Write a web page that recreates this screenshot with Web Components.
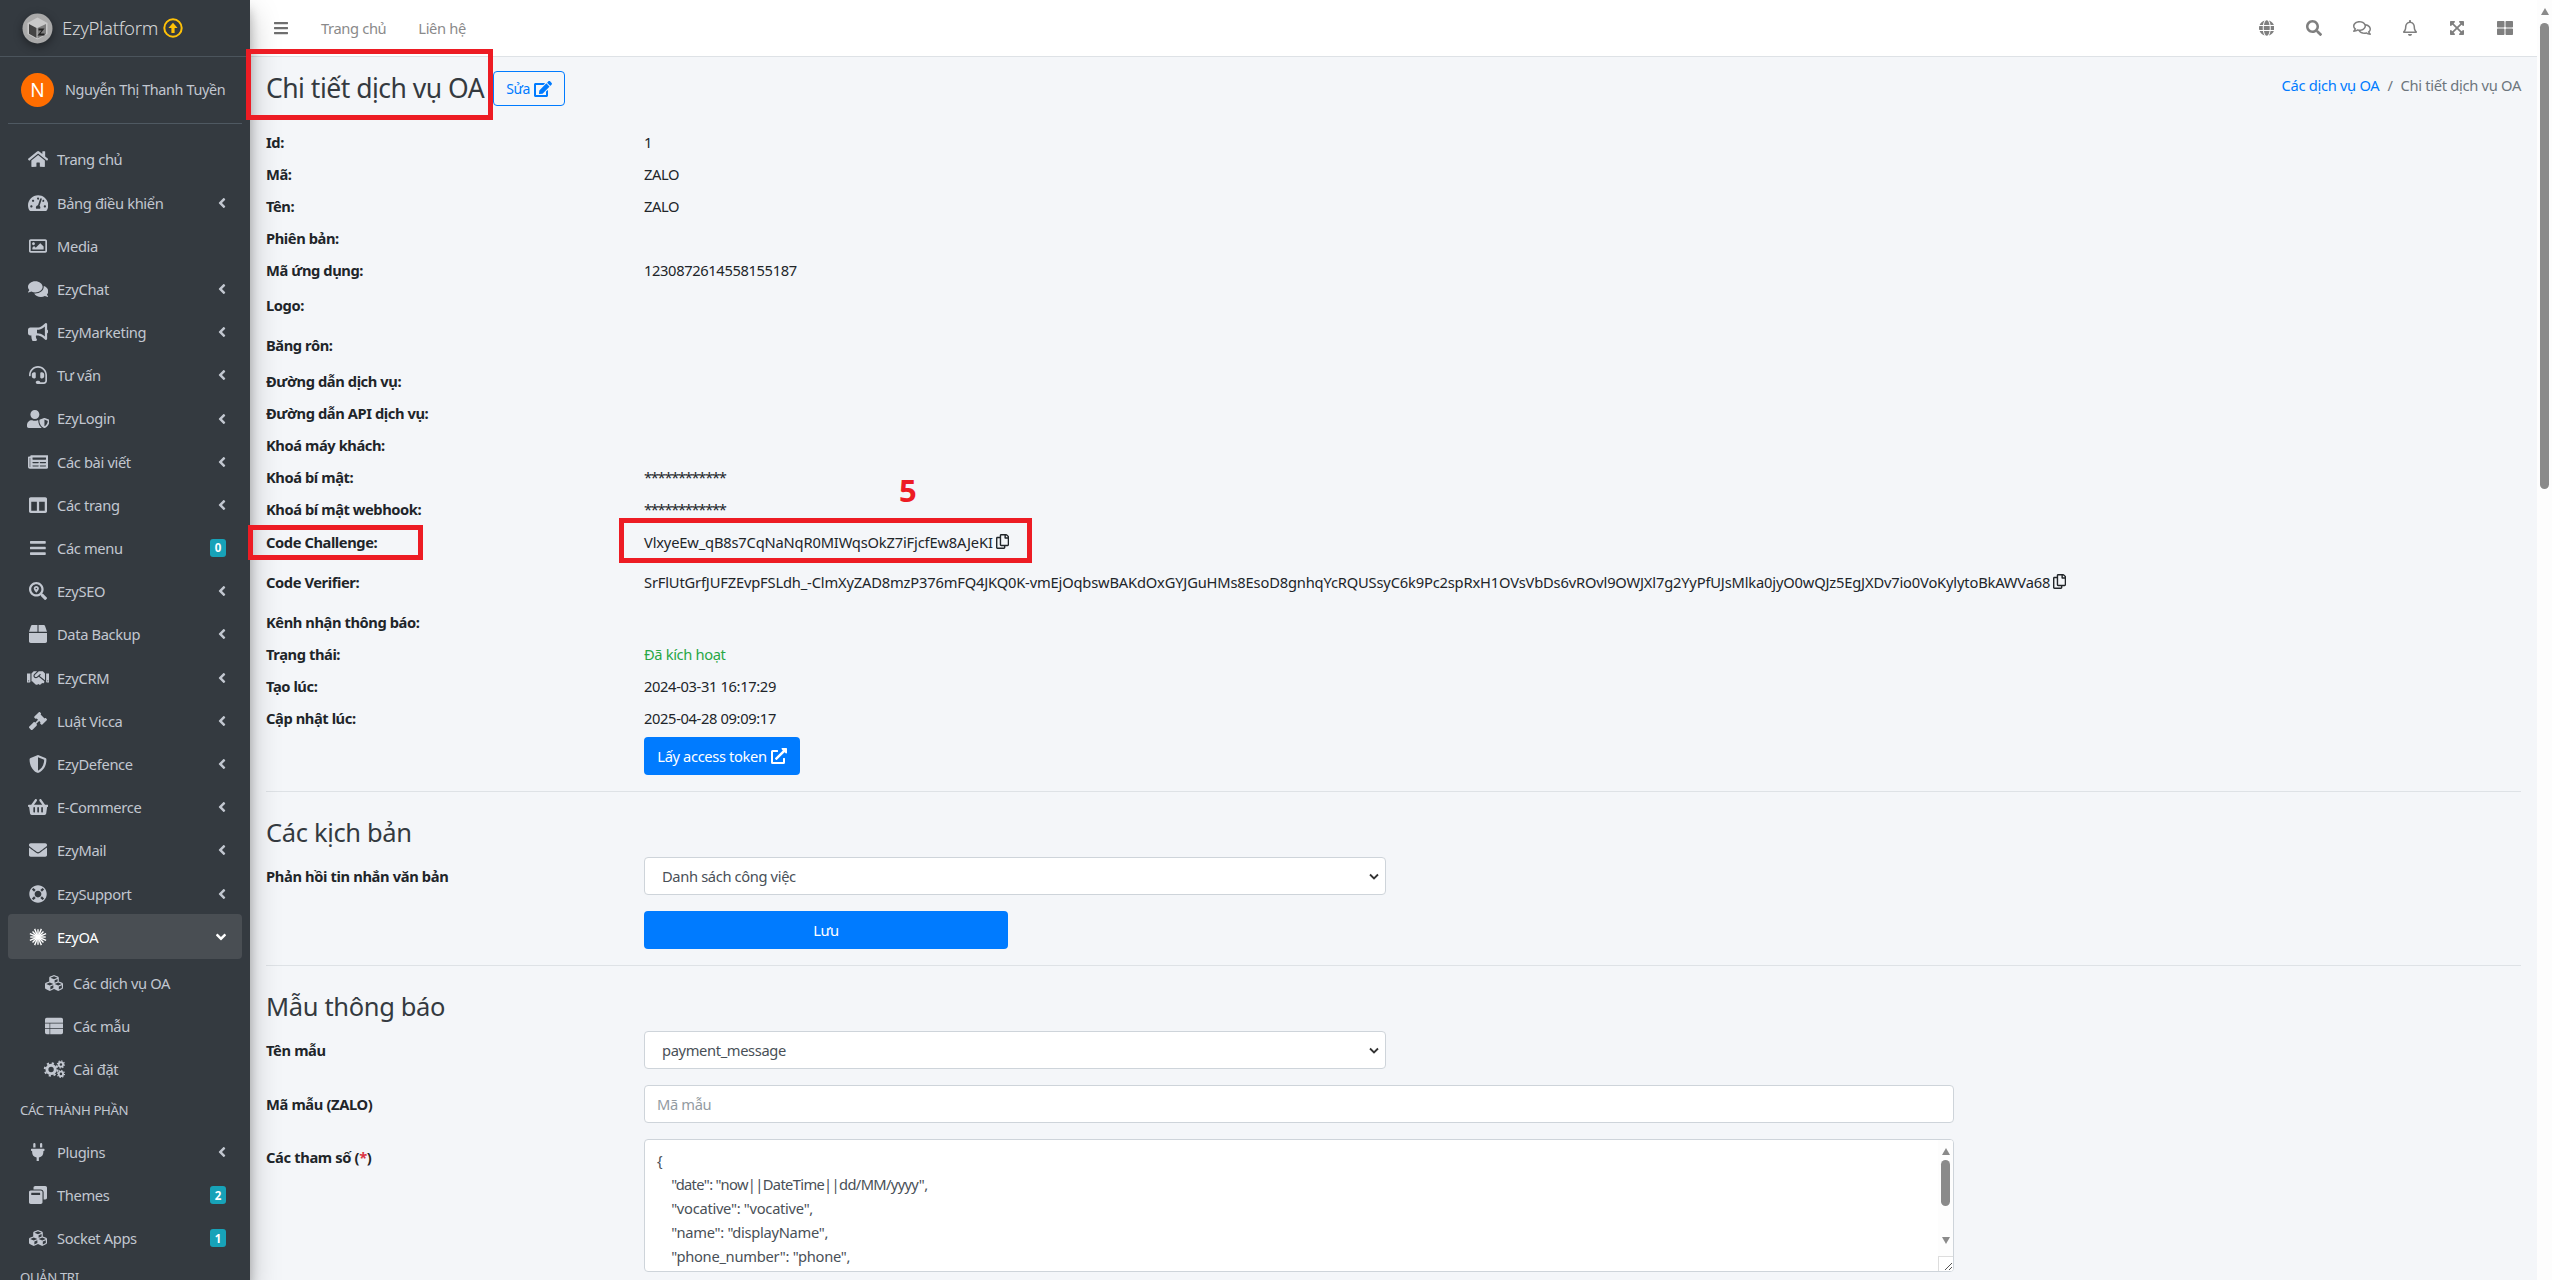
<!DOCTYPE html>
<html lang="vi">
<head>
<meta charset="utf-8">
<title>Chi tiết dịch vụ OA</title>
<style>
html,body{margin:0;padding:0;height:100%;overflow:hidden;background:#f4f6f9}
body{font:14.7px/1.5 "Noto Sans","Open Sans",sans-serif;letter-spacing:-.36px;color:#212529}
</style>
</head>
<body>
<ez-app></ez-app>
<script>
const I={
home:[576,'M280.37 148.26L96 300.11V464a16 16 0 0 0 16 16l112.06-.29a16 16 0 0 0 15.92-16V368a16 16 0 0 1 16-16h64a16 16 0 0 1 16 16v95.64a16 16 0 0 0 16 16.05L464 480a16 16 0 0 0 16-16V300L295.67 148.26a12.19 12.19 0 0 0-15.3 0zM571.6 251.47L488 182.56V44.05a12 12 0 0 0-12-12h-56a12 12 0 0 0-12 12v72.61L318.47 43a48 48 0 0 0-61 0L4.34 251.47a12 12 0 0 0-1.6 16.9l25.5 31A12 12 0 0 0 45.15 301l235.22-193.74a12.19 12.19 0 0 1 15.3 0L530.9 301a12 12 0 0 0 16.9-1.6l25.5-31a12 12 0 0 0-1.7-16.93z'],
bars:[448,'M16 132h416c8.837 0 16-7.163 16-16V76c0-8.837-7.163-16-16-16H16C7.163 60 0 67.163 0 76v40c0 8.837 7.163 16 16 16zm0 160h416c8.837 0 16-7.163 16-16v-40c0-8.837-7.163-16-16-16H16c-8.837 0-16 7.163-16 16v40c0 8.837 7.163 16 16 16zm0 160h416c8.837 0 16-7.163 16-16v-40c0-8.837-7.163-16-16-16H16c-8.837 0-16 7.163-16 16v40c0 8.837 7.163 16 16 16z'],
search:[512,'M505 442.7L405.3 343c-4.5-4.5-10.6-7-17-7H372c27.6-35.3 44-79.7 44-128C416 93.1 322.9 0 208 0S0 93.1 0 208s93.1 208 208 208c48.3 0 92.7-16.4 128-44v16.3c0 6.4 2.5 12.5 7 17l99.7 99.7c9.4 9.4 24.6 9.4 33.9 0l28.3-28.3c9.4-9.4 9.4-24.6.1-34zM208 336c-70.7 0-128-57.2-128-128 0-70.7 57.2-128 128-128 70.7 0 128 57.2 128 128 0 70.7-57.2 128-128 128z'],
left:[256,'M31.7 239l136-136c9.4-9.4 24.6-9.4 33.9 0l22.6 22.6c9.4 9.4 9.4 24.6 0 33.9L127.9 256l96.4 96.4c9.4 9.4 9.4 24.6 0 33.9L201.7 409c-9.4 9.4-24.6 9.4-33.9 0l-136-136c-9.5-9.4-9.5-24.6-.1-34z'],
down:[320,'M143 352.3L7 216.3c-9.4-9.4-9.4-24.6 0-33.9l22.6-22.6c9.4-9.4 24.6-9.4 33.9 0l96.4 96.4 96.4-96.4c9.4-9.4 24.6-9.4 33.9 0l22.6 22.6c9.4 9.4 9.4 24.6 0 33.9l-136 136c-9.2 9.4-24.4 9.4-33.8 0z'],
thlarge:[512,'M296 32h192c13.255 0 24 10.745 24 24v160c0 13.255-10.745 24-24 24H296c-13.255 0-24-10.745-24-24V56c0-13.255 10.745-24 24-24zm-80 0H24C10.745 32 0 42.745 0 56v160c0 13.255 10.745 24 24 24h192c13.255 0 24-10.745 24-24V56c0-13.255-10.745-24-24-24zM0 296v160c0 13.255 10.745 24 24 24h192c13.255 0 24-10.745 24-24V296c0-13.255-10.745-24-24-24H24c-13.255 0-24 10.745-24 24zm296 184h192c13.255 0 24-10.745 24-24V296c0-13.255-10.745-24-24-24H296c-13.255 0-24 10.745-24 24v160c0 13.255 10.745 24 24 24z'],
edit:[576,'M402.6 83.2l90.2 90.2c3.8 3.8 3.8 10 0 13.8L274.4 405.6l-92.8 10.3c-12.4 1.4-22.9-9.1-21.5-21.5l10.3-92.8L388.8 83.2c3.8-3.8 10-3.8 13.8 0zm162-22.9l-48.8-48.8c-15.2-15.2-39.9-15.2-55.2 0l-35.4 35.4c-3.8 3.8-3.8 10 0 13.8l90.2 90.2c3.8 3.8 10 3.8 13.8 0l35.4-35.4c15.2-15.3 15.2-40 0-55.2zM384 346.2V448H64V128h229.8c3.2 0 6.2-1.3 8.5-3.5l40-40c7.6-7.6 2.2-20.5-8.5-20.5H48C21.5 64 0 85.5 0 112v352c0 26.5 21.5 48 48 48h352c26.5 0 48-21.5 48-48V306.2c0-10.7-12.9-16-20.5-8.5l-40 40c-2.2 2.3-3.5 5.3-3.5 8.5z'],
ext:[512,'M432,320H400a16,16,0,0,0-16,16V448H64V128H208a16,16,0,0,0,16-16V80a16,16,0,0,0-16-16H48A48,48,0,0,0,0,112V464a48,48,0,0,0,48,48H400a48,48,0,0,0,48-48V336A16,16,0,0,0,432,320ZM488,0h-128c-21.37,0-32.05,25.91-17,41l35.73,35.73L135,320.37a24,24,0,0,0,0,34L157.67,377a24,24,0,0,0,34,0L435.28,133.32,471,169c15,15,41,4.5,41-17V24A24,24,0,0,0,488,0Z'],
copy:[448,'M433.941 65.941l-51.882-51.882A48 48 0 0 0 348.118 0H176c-26.51 0-48 21.49-48 48v48H48c-26.51 0-48 21.49-48 48v320c0 26.51 21.49 48 48 48h224c26.51 0 48-21.49 48-48v-48h80c26.51 0 48-21.49 48-48V99.882a48 48 0 0 0-14.059-33.941zM266 464H54a6 6 0 0 1-6-6V150a6 6 0 0 1 6-6h74v224c0 26.51 21.49 48 48 48h96v42a6 6 0 0 1-6 6zm128-96H182a6 6 0 0 1-6-6V54a6 6 0 0 1 6-6h106v88c0 13.255 10.745 24 24 24h88v202a6 6 0 0 1-6 6zm6-256h-64V48h9.632c1.591 0 3.117.632 4.243 1.757l48.368 48.368a6 6 0 0 1 1.757 4.243V112z'],
bell:[448,'M439.39 362.29c-19.32-20.76-55.47-51.99-55.47-154.29 0-77.7-54.48-139.9-127.94-155.16V32c0-17.67-14.32-32-31.98-32s-31.98 14.33-31.98 32v20.84C118.56 68.1 64.08 130.3 64.08 208c0 102.3-36.15 133.53-55.47 154.29-6 6.45-8.66 14.16-8.61 21.71.11 16.4 12.98 32 32.1 32h383.8c19.12 0 32-15.6 32.1-32 .05-7.55-2.61-15.27-8.61-21.71zM67.53 368c21.22-27.97 44.42-74.33 44.53-159.42 0-.2-.06-.38-.06-.58 0-61.86 50.14-112 112-112s112 50.14 112 112c0 .2-.06.38-.06.58.11 85.1 23.31 131.46 44.53 159.42H67.53zM224 512c35.32 0 63.97-28.65 63.97-64H160.03c0 35.35 28.65 64 63.97 64z'],
envelope:[512,'M502.3 190.8c3.9-3.1 9.7-.2 9.7 4.7V400c0 26.5-21.5 48-48 48H48c-26.5 0-48-21.5-48-48V195.6c0-5 5.7-7.8 9.7-4.7 22.4 17.4 52.1 39.5 154.1 113.6 21.1 15.4 56.7 47.8 92.2 47.6 35.7.3 72-32.8 92.3-47.6 102-74.1 131.6-96.3 154-113.7zM256 320c23.2.4 56.6-29.2 73.4-41.4 132.7-96.3 142.8-104.7 173.4-128.7 5.8-4.5 9.2-11.5 9.2-18.9v-19c0-26.5-21.5-48-48-48H48C21.5 64 0 85.5 0 112v19c0 7.4 3.4 14.3 9.2 18.9 30.6 23.9 40.7 32.4 173.4 128.7 16.8 12.2 50.2 41.8 73.4 41.4z'],
shield:[512,'M466.5 83.7l-192-80a48.15 48.15 0 0 0-36.9 0l-192 80C27.7 91.1 16 108.6 16 128c0 198.5 114.5 335.7 221.5 380.3 11.8 4.9 25.1 4.9 36.9 0C360.1 472.6 496 349.3 496 128c0-19.4-11.7-36.9-29.5-44.3zM256.1 446.3l-.1-381 175.9 73.3c-3.3 151.4-82.1 261.1-175.8 307.7z'],
columns:[512,'M464 32H48C21.49 32 0 53.49 0 80v352c0 26.51 21.49 48 48 48h416c26.51 0 48-21.49 48-48V80c0-26.51-21.49-48-48-48zM224 416H64V160h160v256zm224 0H288V160h160v256z'],
plug:[384,'M320,32a32,32,0,0,0-64,0v96h64Zm48,128H16A16,16,0,0,0,0,176v32a16,16,0,0,0,16,16H32v32A160.07,160.07,0,0,0,160,412.8V512h64V412.8A160.07,160.07,0,0,0,352,256V224h16a16,16,0,0,0,16-16V176A16,16,0,0,0,368,160ZM128,32a32,32,0,0,0-64,0v96h64Z'],
gavel:[512,'M504.971 199.362l-22.627-22.627c-9.373-9.373-24.569-9.373-33.941 0l-5.657 5.657L329.608 69.255l5.657-5.657c9.373-9.373 9.373-24.569 0-33.941L312.638 7.029c-9.373-9.373-24.569-9.373-33.941 0L154.246 131.48c-9.373 9.373-9.373 24.569 0 33.941l22.627 22.627c9.373 9.373 24.569 9.373 33.941 0l5.657-5.657 39.598 39.598-81.04 81.04-5.657-5.657c-12.497-12.497-32.758-12.497-45.255 0L9.373 412.118c-12.497 12.497-12.497 32.758 0 45.255l45.255 45.255c12.497 12.497 32.758 12.497 45.255 0l114.745-114.745c12.497-12.497 12.497-32.758 0-45.255l-5.657-5.657 81.04-81.04 39.598 39.598-5.657 5.657c-9.373 9.373-9.373 24.569 0 33.941l22.627 22.627c9.373 9.373 24.569 9.373 33.941 0l124.451-124.451c9.372-9.372 9.372-24.568 0-33.941z'],
lifering:[512,'M256 8C119.033 8 8 119.033 8 256s111.033 248 248 248 248-111.033 248-248S392.967 8 256 8zm173.696 119.559l-63.399 63.399c-10.987-18.559-26.67-34.252-45.255-45.255l63.399-63.399a218.396 218.396 0 0 1 45.255 45.255zM256 352c-53.019 0-96-42.981-96-96s42.981-96 96-96 96 42.981 96 96-42.981 96-96 96zM127.559 82.304l63.399 63.399c-18.559 10.987-34.252 26.67-45.255 45.255l-63.399-63.399a218.372 218.372 0 0 1 45.255-45.255zM82.304 384.441l63.399-63.399c10.987 18.559 26.67 34.252 45.255 45.255l-63.399 63.399a218.396 218.396 0 0 1-45.255-45.255zm302.137 45.255l-63.399-63.399c18.559-10.987 34.252-26.67 45.255-45.255l63.399 63.399a218.429 218.429 0 0 1-45.255 45.255z'],
cubes:[512,'M488.6 250.2L392 214V105.5c0-15-9.3-28.4-23.4-33.7l-100-37.5c-8.1-3.1-17.1-3.1-25.3 0l-100 37.5c-14.1 5.3-23.4 18.7-23.4 33.7V214l-96.6 36.2C9.3 255.5 0 268.9 0 283.9V394c0 13.6 7.7 26.1 19.9 32.2l100 50c10.1 5.1 22.1 5.1 32.2 0l103.9-52 103.9 52c10.1 5.1 22.1 5.1 32.2 0l100-50c12.2-6.1 19.9-18.6 19.9-32.2V283.9c0-15-9.3-28.4-23.4-33.7zM358 214.8l-85 31.9v-68.2l85-37v73.3zM154 104.1l102-38.2 102 38.2v.6l-102 41.4-102-41.4v-.6zm84 291.1l-85 42.5v-79.1l85-38.8v75.4zm0-112l-102 41.4-102-41.4v-.6l102-38.2 102 38.2v.6zm240 112l-85 42.5v-79.1l85-38.8v75.4zm0-112l-102 41.4-102-41.4v-.6l102-38.2 102 38.2v.6z'],
bullhorn:[576,'M576 240c0-23.63-12.95-44.04-32-55.12V32.01C544 23.26 537.02 0 512 0c-7.12 0-14.19 2.38-19.98 7.02l-85.03 68.03C364.28 109.19 310.66 128 256 128H64c-35.35 0-64 28.65-64 64v96c0 35.35 28.65 64 64 64h33.7c-1.39 10.48-2.18 21.14-2.18 32 0 39.77 9.26 77.35 25.56 110.94 5.19 10.69 16.52 17.06 28.4 17.06h74.28c26.05 0 41.69-29.84 25.9-50.56-16.4-21.52-26.15-48.36-26.15-77.44 0-11.11 1.62-21.79 4.41-32H256c54.66 0 108.28 18.81 150.98 52.95l85.03 68.03a32.023 32.023 0 0 0 19.98 7.02c24.92 0 32-22.78 32-32V295.13C563.05 284.04 576 263.63 576 240zm-96 141.42l-33.05-26.44C392.95 311.78 325.12 288 256 288v-96c69.12 0 136.95-23.78 190.95-66.98L480 98.58v282.84z'],
comments:[576,'M416 192c0-88.4-93.1-160-208-160S0 103.6 0 192c0 34.3 14.1 65.9 38 92-13.4 30.2-35.5 54.2-35.8 54.5-2.2 2.3-2.8 5.7-1.5 8.7S4.8 352 8 352c36.6 0 66.9-12.3 88.7-25 32.2 15.7 70.3 25 111.3 25 114.9 0 208-71.6 208-160zm122 220c23.9-26 38-57.7 38-92 0-66.9-53.5-124.2-129.3-148.1.9 6.6 1.3 13.3 1.3 20.1 0 105.9-107.7 192-240 192-10.8 0-21.3-.8-31.7-1.9C207.8 439.6 281.8 480 368 480c41 0 79.1-9.2 111.3-25 21.8 12.7 52.1 25 88.7 25 3.2 0 6.1-1.9 7.3-4.8 1.3-2.9.7-6.3-1.5-8.7-.3-.3-22.4-24.2-35.8-54.5z'],
commentso:[576,'M532 386.2c27.5-27.1 44-61.1 44-98.2 0-80-76.5-146.1-176.2-157.9C368.3 72.5 294.3 32 208 32 93.1 32 0 103.6 0 192c0 37 16.5 71 44 98.2-15.3 30.7-37.3 54.5-37.7 54.9-6.3 6.7-8.1 16.5-4.4 25 3.6 8.5 12 14 21.2 14 53.5 0 96.7-20.2 125.2-38.8 9.2 2.1 18.7 3.7 28.4 4.9C208.1 407.6 281.8 448 368 448c20.8 0 40.8-2.4 59.8-6.8C456.3 459.7 499.4 480 553 480c9.2 0 17.5-5.5 21.2-14 3.6-8.5 1.9-18.3-4.4-25-.4-.3-22.5-24.1-37.8-54.8zm-392.8-92.3L122.1 305c-14.1 9.1-28.5 16.3-43.1 21.4 2.7-4.7 5.4-9.7 8-14.8l15.5-31.1L77.7 256C64.2 242.6 48 220.7 48 192c0-60.7 73.3-112 160-112s160 51.3 160 112-73.3 112-160 112c-16.5 0-33-1.9-49-5.6l-19.8-4.5zM498.3 352l-24.7 24.4 15.5 31.1c2.6 5.1 5.3 10.1 8 14.8-14.6-5.1-29-12.3-43.1-21.4l-17.1-11.1-19.9 4.6c-16 3.7-32.5 5.6-49 5.6-54 0-102.2-20.1-131.3-49.7C338 339.5 416 272.9 416 192c0-3.4-.4-6.7-.7-10C479.7 196.5 528 238.8 528 288c0 28.7-16.2 50.6-29.7 64z'],
globe:[496,'M336.5 160C322 70.7 287.8 8 248 8s-74 62.7-88.5 152h177zM152 256c0 22.2 1.2 43.5 3.3 64h185.3c2.1-20.5 3.3-41.8 3.3-64s-1.2-43.5-3.3-64H155.3c-2.1 20.5-3.3 41.8-3.3 64zm324.7-96c-28.6-67.9-86.5-120.4-158-141.6 24.4 33.8 41.2 84.7 50 141.6h108zM177.2 18.4C105.8 39.6 47.8 92.1 19.3 160h108c8.7-56.9 25.5-107.8 49.9-141.6zM487.4 192H372.7c2.1 21 3.3 42.5 3.3 64s-1.2 43-3.3 64h114.6c5.5-20.5 8.6-41.8 8.6-64s-3.1-43.5-8.5-64zM120 256c0-21.5 1.2-43 3.3-64H8.6C3.2 212.5 0 233.8 0 256s3.2 43.5 8.6 64h114.6c-2-21-3.2-42.5-3.2-64zm39.5 96c14.5 89.3 48.7 152 88.5 152s74-62.7 88.5-152h-177zm159.3 141.6c71.4-21.2 129.4-73.7 158-141.6h-108c-8.8 56.9-25.6 107.8-50 141.6zM19.3 352c28.6 67.9 86.5 120.4 158 141.6-24.4-33.8-41.2-84.7-50-141.6h-108z'],
expand:[448,'M448.1 344v112c0 13.3-10.7 24-24 24h-112c-21.4 0-32.1-25.9-17-41l36.2-36.2L224 295.6 116.8 402.9 153 439c15.1 15.1 4.4 41-17 41H24c-13.3 0-24-10.7-24-24V344c0-21.4 25.9-32.1 41-17l36.2 36.2L184.5 256 77.2 148.7 41 185c-15.1 15.1-41 4.4-41-17V56c0-13.3 10.7-24 24-24h112c21.4 0 32.1 25.9 17 41l-36.2 36.2L224 216.4l107.3-107.3L295.1 73c-15.1-15.1-4.4-41 17-41h112c13.3 0 24 10.7 24 24v112c0 21.4-25.9 32.1-41 17l-36.2-36.2L263.6 256l107.3 107.3 36.2-36.2c15.1-15.2 41-4.5 41 16.9z'],
image:[512,'M464 64H48C21.49 64 0 85.49 0 112v288c0 26.51 21.49 48 48 48h416c26.51 0 48-21.49 48-48V112c0-26.51-21.49-48-48-48zm-6 336H54a6 6 0 0 1-6-6V118a6 6 0 0 1 6-6h404a6 6 0 0 1 6 6v276a6 6 0 0 1-6 6zM128 152c-22.091 0-40 17.909-40 40s17.909 40 40 40 40-17.909 40-40-17.909-40-40-40zM96 352h320v-80l-87.515-87.515c-4.686-4.686-12.284-4.686-16.971 0L192 304l-39.515-39.515c-4.686-4.686-12.284-4.686-16.971 0L96 304v48z'],
gauge:[576,'M288 32C128.94 32 0 160.94 0 320c0 52.8 14.25 102.26 39.06 144.8 5.61 9.62 16.3 15.2 27.44 15.2h443c11.14 0 21.83-5.58 27.44-15.2C561.75 422.26 576 372.8 576 320c0-159.06-128.94-288-288-288zm0 64c14.71 0 26.58 10.13 30.32 23.65-1.11 2.26-2.64 4.23-3.45 6.67l-9.22 27.67c-5.13 3.49-10.97 6.01-17.64 6.01-17.67 0-32-14.33-32-32S270.33 96 288 96zM96 384c-17.67 0-32-14.33-32-32s14.33-32 32-32 32 14.33 32 32-14.33 32-32 32zm48-160c-17.67 0-32-14.33-32-32s14.33-32 32-32 32 14.33 32 32-14.33 32-32 32zm246.77-72.41l-61.33 184C343.13 347.33 352 364.54 352 384c0 11.72-3.38 22.55-8.88 32H232.88c-5.5-9.45-8.88-20.28-8.88-32 0-33.94 26.5-61.43 59.9-63.59l61.34-184.01c4.17-12.56 17.73-19.45 30.36-15.17 12.57 4.19 19.35 17.79 15.17 30.36zm14.66 57.2l15.52-46.55c3.47-1.29 7.13-2.23 11.05-2.23 17.67 0 32 14.33 32 32s-14.33 32-32 32c-11.38-.01-20.89-6.28-26.57-15.22zM480 384c-17.67 0-32-14.33-32-32s14.33-32 32-32 32 14.33 32 32-14.33 32-32 32z'],
usershield:[640,'M622.3 271.1l-115.2-45c-4.1-1.6-12.6-3.7-22.2 0l-115.2 45c-10.7 4.2-17.7 14-17.7 24.9 0 111.6 68.7 188.8 132.9 213.9 9.6 3.7 18 1.6 22.2 0C558.4 489.9 640 420.5 640 296c0-10.9-7-20.7-17.7-24.9zM496 462.4V273.3l95.5 37.3c-5.6 87.1-60.9 135.4-95.5 151.8zM224 256c70.7 0 128-57.3 128-128S294.7 0 224 0 96 57.3 96 128s57.3 128 128 128zm96 40c0-2.5.8-4.8 1.1-7.2-2.5-.1-4.9-.8-7.5-.8h-16.7c-22.2 10.2-46.9 16-72.9 16s-50.6-5.8-72.9-16h-16.7C60.2 288 0 348.2 0 422.4V464c0 26.5 21.5 48 48 48h352c6.8 0 13.3-1.5 19.2-4-54-42.9-99.2-116.7-99.2-212z'],
headset:[512,'M192 208c0-17.67-14.33-32-32-32h-16c-35.35 0-64 28.65-64 64v48c0 35.35 28.65 64 64 64h16c17.67 0 32-14.33 32-32V208zm176 144c35.35 0 64-28.65 64-64v-48c0-35.35-28.65-64-64-64h-16c-17.67 0-32 14.33-32 32v112c0 17.67 14.33 32 32 32h16zM256 0C113.18 0 4.58 118.83 0 256v16c0 8.84 7.16 16 16 16h16c8.84 0 16-7.16 16-16v-16c0-114.69 93.31-208 208-208s208 93.31 208 208h-.12c.08 2.43.12 165.72.12 165.72 0 23.35-18.93 42.28-42.28 42.28H320c0-26.51-21.49-48-48-48h-32c-26.51 0-48 21.49-48 48s21.49 48 48 48h181.72c49.86 0 90.28-40.42 90.28-90.28V256C507.42 118.83 398.82 0 256 0z'],
newspaper:[576,'M552 64H88c-13.255 0-24 10.745-24 24v8H24c-13.255 0-24 10.745-24 24v272c0 30.928 25.072 56 56 56h472c26.51 0 48-21.49 48-48V88c0-13.255-10.745-24-24-24zM56 400a8 8 0 0 1-8-8V144h16v248a8 8 0 0 1-8 8zm236-16H140c-6.627 0-12-5.373-12-12v-8c0-6.627 5.373-12 12-12h152c6.627 0 12 5.373 12 12v8c0 6.627-5.373 12-12 12zm208 0H348c-6.627 0-12-5.373-12-12v-8c0-6.627 5.373-12 12-12h152c6.627 0 12 5.373 12 12v8c0 6.627-5.373 12-12 12zm-208-96H140c-6.627 0-12-5.373-12-12v-8c0-6.627 5.373-12 12-12h152c6.627 0 12 5.373 12 12v8c0 6.627-5.373 12-12 12zm208 0H348c-6.627 0-12-5.373-12-12v-8c0-6.627 5.373-12 12-12h152c6.627 0 12 5.373 12 12v8c0 6.627-5.373 12-12 12zm0-96H140c-6.627 0-12-5.373-12-12v-40c0-6.627 5.373-12 12-12h360c6.627 0 12 5.373 12 12v40c0 6.627-5.373 12-12 12z'],
searchloc:[512,'M505.04 442.66l-99.71-99.69c-4.5-4.5-10.6-7-17-7h-16.3c27.6-35.3 44-79.69 44-127.99C416.03 93.09 322.92 0 208.02 0S0 93.09 0 207.98s93.11 207.98 208.02 207.98c48.3 0 92.71-16.4 128.01-44v16.3c0 6.4 2.5 12.5 7 17l99.71 99.69c9.4 9.4 24.6 9.4 33.9 0l28.3-28.3c9.4-9.4 9.4-24.6.1-33.99zm-297.02-90.7c-79.54 0-144-64.34-144-143.98 0-79.53 64.35-143.98 144-143.98 79.54 0 144 64.34 144 143.98 0 79.53-64.35 143.98-144 143.98zm.02-239.96c-40.78 0-73.84 33.05-73.84 73.83 0 32.96 48.26 93.05 66.75 114.86a9.24 9.24 0 0 0 14.18 0c18.49-21.81 66.75-81.9 66.75-114.86 0-40.78-33.06-73.83-73.84-73.83zm0 96c-13.26 0-24-10.75-24-24 0-13.26 10.75-24 24-24s24 10.74 24 24c0 13.25-10.75 24-24 24z'],
box:[512,'M509.5 184.6L458.9 32.8C452.4 13.2 434.1 0 413.4 0H272v192h238.7c-.4-2.5-.4-5-1.2-7.4zM240 0H98.6c-20.7 0-39 13.2-45.5 32.8L2.5 184.6c-.8 2.4-.8 4.9-1.2 7.4H240V0zM0 224v240c0 26.5 21.5 48 48 48h416c26.5 0 48-21.5 48-48V224H0z'],
handshake:[640,'M434.7 64h-85.9c-8 0-15.7 3-21.6 8.4l-98.3 90c-.1.1-.2.3-.3.4-16.6 15.6-16.3 40.5-2.1 56 12.7 13.9 39.4 17.6 56.1 2.7.1-.1.3-.1.4-.2l79.9-73.2c6.5-5.9 16.7-5.5 22.6 1 6 6.5 5.5 16.6-1 22.6l-26.1 23.9L504 313.8c2.9 2.4 5.5 5 7.9 7.7V128l-54.6-54.6c-5.9-6-14.1-9.4-22.6-9.4zM544 128.2v223.9c0 17.7 14.3 32 32 32h64V128.2h-96zm48 223.9c-8.8 0-16-7.2-16-16s7.2-16 16-16 16 7.2 16 16-7.2 16-16 16zM0 384h64c17.7 0 32-14.3 32-32V128.2H0V384zm48-63.9c8.8 0 16 7.2 16 16s-7.2 16-16 16-16-7.2-16-16c0-8.9 7.2-16 16-16zm435.9 18.6L334.6 217.5l-30 27.5c-29.7 27.1-75.2 24.5-101.7-4.4-26.9-29.4-24.8-74.9 4.4-101.7L289.1 64h-83.8c-8.5 0-16.6 3.4-22.6 9.4L128 128v223.9h18.3l90.5 81.9c27.4 22.3 67.7 18.1 90-9.3l.2-.2 17.9 15.5c15.9 13 39.4 10.5 52.3-5.4l31.4-38.6 5.4 4.4c13.7 11.1 33.9 9.1 45-4.7l9.5-11.7c11.2-13.8 9.1-33.9-4.6-45.1z'],
basket:[576,'M576 216v16c0 13.255-10.745 24-24 24h-8l-26.113 182.788C514.509 462.435 494.257 480 470.37 480H105.63c-23.887 0-44.139-17.565-47.518-41.212L32 256h-8c-13.255 0-24-10.745-24-24v-16c0-13.255 10.745-24 24-24h67.341l106.78-146.821c10.395-14.292 30.407-17.453 44.701-7.058 14.293 10.395 17.453 30.408 7.058 44.701L170.477 192h235.046L326.12 82.821c-10.395-14.292-7.234-34.306 7.059-44.701 14.291-10.395 34.306-7.235 44.701 7.058L484.659 192H552c13.255 0 24 10.745 24 24zM312 392V280c0-13.255-10.745-24-24-24s-24 10.745-24 24v112c0 13.255 10.745 24 24 24s24-10.745 24-24zm112 0V280c0-13.255-10.745-24-24-24s-24 10.745-24 24v112c0 13.255 10.745 24 24 24s24-10.745 24-24zm-224 0V280c0-13.255-10.745-24-24-24s-24 10.745-24 24v112c0 13.255 10.745 24 24 24s24-10.745 24-24z'],
windows:[512,'M512 48v288c0 26.5-21.5 48-48 48h-48V176c0-44.1-35.9-80-80-80H128V48c0-26.5 21.5-48 48-48h288c26.5 0 48 21.5 48 48zM384 176v288c0 26.5-21.5 48-48 48H48c-26.5 0-48-21.5-48-48V176c0-26.5 21.5-48 48-48h288c26.5 0 48 21.5 48 48zm-68 28c0-6.6-5.4-12-12-12H76c-6.6 0-12 5.4-12 12v52h252v-52z']
};
const EXTRA={
burst:[512,(()=>{let s='<circle cx="256" cy="256" r="34" fill="currentColor"/>';for(let i=0;i<16;i++){const a=i*Math.PI/8,r=i%2?250:220,x=256+r*Math.cos(a),y=256+r*Math.sin(a);s+=`<line x1="256" y1="256" x2="${x}" y2="${y}" stroke="currentColor" stroke-width="40"/>`}return s})()],
table:[512,'<path fill="currentColor" d="M48 24h416a48 48 0 0 1 48 48v92H0V72a48 48 0 0 1 48-48zM0 182h130v132H0zM148 182h364v132H148zM0 332h130v156H48a48 48 0 0 1-48-48zM148 332h364v108a48 48 0 0 1-48 48H148z"/>'],
cogs:[640,'<circle cx="230" cy="270" r="118" fill="none" stroke="currentColor" stroke-width="84"/><circle cx="230" cy="270" r="180" fill="none" stroke="currentColor" stroke-width="56" stroke-dasharray="62 79"/><circle cx="510" cy="125" r="62" fill="none" stroke="currentColor" stroke-width="52"/><circle cx="510" cy="125" r="100" fill="none" stroke="currentColor" stroke-width="36" stroke-dasharray="36 42"/><circle cx="510" cy="395" r="62" fill="none" stroke="currentColor" stroke-width="52"/><circle cx="510" cy="395" r="100" fill="none" stroke="currentColor" stroke-width="36" stroke-dasharray="36 42"/>']
};
class Base extends HTMLElement{
  constructor(){super();this.attachShadow({mode:'open'})}
  attr(n,d=''){return this.hasAttribute(n)?this.getAttribute(n):d}
}
class EzIcon extends Base{
  connectedCallback(){
    const n=this.attr('name'),s=+this.attr('size',16);
    const d=I[n],e=EXTRA[n],w=(d||e)[0];
    const inner=d?`<path fill="currentColor" d="${d[1]}"/>`:e[1];
    this.shadowRoot.innerHTML=`<style>:host{display:inline-flex;align-items:center;justify-content:center;line-height:0;flex:none}svg{display:block}</style><svg width="${s*w/512}" height="${s}" viewBox="0 0 ${w} 512">${inner}</svg>`;
  }
}
customElements.define('ez-icon',EzIcon);
class EzNavItem extends Base{
  connectedCallback(){
    const active=this.hasAttribute('active'),sub=this.hasAttribute('sub');
    const chev=this.attr('chev'),badge=this.attr('badge'),ic=this.attr('icon'),sz=this.attr('isize','18');
    this.shadowRoot.innerHTML=`<style>
    :host{display:block;height:43.2px;position:relative;color:${active?'#fff':'#c2c7d0'}}
    .bg{position:absolute;left:8px;right:8px;top:-1px;bottom:-1px;border-radius:4px;background:${active?'#494e53':'transparent'}}
    .row{position:relative;height:100%;display:flex;align-items:center;padding:0 24px 0 ${sub?40:24}px;box-sizing:border-box}
    .ic{width:28px;display:flex;justify-content:center;margin-right:5px}
    .t{flex:1;white-space:nowrap}
    .b{width:16px;height:18px;border-radius:3px;background:#17a2b8;color:#fff;font-size:11.5px;font-weight:700;display:flex;align-items:center;justify-content:center;letter-spacing:0}
    </style><div class="bg"></div><div class="row"><span class="ic"><ez-icon name="${ic}" size="${sz}"></ez-icon></span><span class="t"><slot></slot></span>${chev?`<ez-icon name="${chev}" size="16"></ez-icon>`:''}${badge?`<span class="b">${badge}</span>`:''}</div>`;
  }
}
customElements.define('ez-nav-item',EzNavItem);
class EzNavHeader extends Base{
  connectedCallback(){
    this.shadowRoot.innerHTML=`<style>:host{display:flex;align-items:center;height:${this.attr('h','36.7')}px;padding-left:20px;color:#c2c7d0;font-size:13.2px;white-space:nowrap}</style><slot></slot>`;
  }
}
customElements.define('ez-nav-header',EzNavHeader);
class EzSidebar extends Base{
  connectedCallback(){
    const items=[['home','Trang chủ'],['gauge','Bảng điều khiển','left'],['image','Media'],['comments','EzyChat','left'],['bullhorn','EzyMarketing','left'],['headset','Tư vấn','left'],['usershield','EzyLogin','left'],['newspaper','Các bài viết','left'],['columns','Các trang','left'],['bars','Các menu','','0'],['searchloc','EzySEO','left'],['box','Data Backup','left'],['handshake','EzyCRM','left'],['gavel','Luật Vicca','left'],['shield','EzyDefence','left'],['basket','E-Commerce','left'],['envelope','EzyMail','left'],['lifering','EzySupport','left']];
    const nav=items.map(([i,t,c,b])=>`<ez-nav-item icon="${i}" ${c?`chev="${c}"`:''} ${b?`badge="${b}"`:''}>${t}</ez-nav-item>`).join('');
    this.shadowRoot.innerHTML=`<style>
    :host{display:block;width:250px;flex:none;height:100%;background:#343a40;position:relative;z-index:2;box-shadow:0 14px 28px rgba(0,0,0,.25),0 10px 10px rgba(0,0,0,.22);overflow:hidden;color:#c2c7d0;font-size:14.7px}
    .brand{height:56px;border-bottom:1px solid #4b545c;display:flex;align-items:center;padding-left:22px;font-size:18.6px;font-weight:300;color:rgba(255,255,255,.8);box-sizing:content-box}
    .brand svg{display:block}
    .logo{margin-right:9px;filter:drop-shadow(0 3px 5px rgba(0,0,0,.4))}
    .up{margin-left:5px}
    .user{height:66px;margin:0 8px;border-bottom:1px solid #4f5962;display:flex;align-items:center;padding-left:13px}
    .av{width:33px;height:34px;border-radius:50%;background:#ff6d00;color:#fff;font-size:19px;display:flex;align-items:center;justify-content:center;margin-right:11px;letter-spacing:0}
    .name{white-space:nowrap;font-size:14.4px}
    nav{display:block;padding-top:13.8px}
    .subs{padding-top:3px}
    </style>
    <div class="brand">
      <svg class="logo" width="31" height="31" viewBox="0 0 31 31"><circle cx="15.5" cy="15.5" r="15" fill="#a9a9a9"/><path d="M15.5 4.5l10 5.5v11l-10 5.5-10-5.5v-11z" fill="#c9c9c9"/><path d="M7 11l7.5 4v10l-7.5-4.2z" fill="#444"/><path d="M15.5 15l8.5-4v10l-8.5 4.5z" fill="#7d7d7d"/><path d="M16.5 15.5h6l-4 5h4v2h-7l4-5h-3z" fill="#222"/></svg>
      <span>EzyPlatform</span>
      <svg class="up" width="20" height="20" viewBox="0 0 20 20"><circle cx="10" cy="10" r="8.7" fill="none" stroke="#ffc107" stroke-width="2"/><path d="M10 4.8L14.6 10h-3v5H8.4v-5h-3z" fill="#ffc107"/></svg>
    </div>
    <div class="user"><div class="av">N</div><div class="name">Nguyễn Thị Thanh Tuyền</div></div>
    <nav>${nav}
      <ez-nav-item icon="burst" chev="down" active>EzyOA</ez-nav-item>
      <div class="subs">
      <ez-nav-item sub icon="cubes">Các dịch vụ OA</ez-nav-item>
      <ez-nav-item sub icon="table">Các mẫu</ez-nav-item>
      <ez-nav-item sub icon="cogs">Cài đặt</ez-nav-item>
      </div>
      <ez-nav-header h="39.5">CÁC THÀNH PHẦN</ez-nav-header>
      <ez-nav-item icon="plug" chev="left">Plugins</ez-nav-item>
      <ez-nav-item icon="windows" badge="2">Themes</ez-nav-item>
      <ez-nav-item icon="cubes" badge="1">Socket Apps</ez-nav-item>
      <ez-nav-header>QUẢN TRỊ</ez-nav-header>
    </nav>`;
  }
}
customElements.define('ez-sidebar',EzSidebar);
class EzTopbar extends Base{
  connectedCallback(){
    const r=[['globe',16],['search',16],['commentso',16],['bell',16],['expand',16],['thlarge',16]];
    this.shadowRoot.innerHTML=`<style>
    :host{display:flex;align-items:center;height:56px;border-bottom:1px solid #dee2e6;background:#fff;box-sizing:content-box;color:#7f7f7f;flex:none}
    .bars{margin-left:24px;margin-right:33px;color:#6f6f6f}
    a{color:#8a8a8a;margin-right:32px;white-space:nowrap}
    .right{margin-left:auto;display:flex;align-items:center;padding-right:8px}
    .right span{width:47.7px;display:flex;justify-content:center}
    </style><ez-icon class="bars" name="bars" size="16"></ez-icon><a>Trang chủ</a><a>Liên hệ</a>
    <div class="right">${r.map(([n,s])=>`<span><ez-icon name="${n}" size="${s}"></ez-icon></span>`).join('')}</div>`;
  }
}
customElements.define('ez-topbar',EzTopbar);
class EzRow extends Base{
  connectedCallback(){
    this.shadowRoot.innerHTML=`<style>
    :host{display:flex;align-items:center;height:${this.attr('h','32')}px;white-space:nowrap}
    b{width:378px;flex:none;font-weight:700;letter-spacing:-.42px}
    .v{display:flex;align-items:center;gap:3px}
    </style><b>${this.attr('label')}</b><div class="v"><slot></slot></div>`;
  }
}
customElements.define('ez-row',EzRow);
class EzButton extends Base{
  connectedCallback(){
    const o=this.hasAttribute('outline');
    this.shadowRoot.innerHTML=`<style>
    :host{display:inline-flex;align-items:center;justify-content:center;gap:4px;box-sizing:border-box;border-radius:4px;height:${this.attr('h','38')}px;width:${this.attr('w','auto')}${this.hasAttribute('w')?'px':''};
      ${o?'background:transparent;border:1px solid #007bff;color:#007bff;font-size:14px':'background:#007bff;color:#fff'};white-space:nowrap;flex:none}
    </style><slot></slot>`;
  }
}
customElements.define('ez-button',EzButton);
class EzField extends Base{
  connectedCallback(){
    const kind=this.attr('kind','input');
    this.shadowRoot.innerHTML=`<style>
    :host{display:flex;margin-bottom:16px;align-items:${kind==='area'?'flex-start':'center'}}
    b{width:378px;flex:none;font-weight:700;white-space:nowrap;${kind==='area'?'margin-top:7px':''}}
    .f{flex:none;width:${this.attr('w','1310')}px}
    </style><b><slot name="label"></slot></b><div class="f"><slot></slot></div>`;
  }
}
customElements.define('ez-field',EzField);
class EzSelect extends Base{
  connectedCallback(){
    this.shadowRoot.innerHTML=`<style>
    :host{display:flex;align-items:center;box-sizing:border-box;height:38px;border:1px solid #ced4da;border-radius:4px;background:#fff;color:#495057;padding:0 6px 0 17px;justify-content:space-between}
    svg{display:block}
    </style><span><slot></slot></span><svg width="10" height="7" viewBox="0 0 10 7"><path d="M1 1.5l4 4 4-4" fill="none" stroke="#333" stroke-width="1.8"/></svg>`;
  }
}
customElements.define('ez-select',EzSelect);
class EzInput extends Base{
  connectedCallback(){
    this.shadowRoot.innerHTML=`<style>
    :host{display:flex;align-items:center;box-sizing:border-box;height:38px;border:1px solid #ced4da;border-radius:4px;background:#fff;color:#939ba2;padding:0 12px}
    </style><slot></slot>`;
  }
}
customElements.define('ez-input',EzInput);
class EzTextarea extends Base{
  connectedCallback(){
    this.shadowRoot.innerHTML=`<style>
    :host{display:flex;box-sizing:border-box;height:133px;border:1px solid #ced4da;border-radius:4px;background:#fff;color:#495057;overflow:hidden}
    .t{flex:1;padding:8px 12px;line-height:24px;white-space:pre;overflow:hidden;letter-spacing:-.28px}
    .s{width:15px;flex:none;display:flex;flex-direction:column;align-items:center;background:#fdfdfd;position:relative}
    .u,.d{width:0;height:0;border-left:4.5px solid transparent;border-right:4.5px solid transparent}
    .u{border-bottom:7px solid #8a8a8a;margin-top:8px}
    .th{width:9px;height:46px;border-radius:5px;background:#8a8a8a;margin-top:5px}
    .d{border-top:7px solid #8a8a8a;margin-top:31px}
    .r{position:absolute;left:0;right:0;bottom:0;height:15px;background:#fff;border-left:1px solid #ddd;border-top:1px solid #ddd;box-sizing:border-box}
    .r svg{display:block}
    </style><div class="t"><slot></slot></div><div class="s"><div class="u"></div><div class="th"></div><div class="d"></div><div class="r"><svg width="14" height="14" viewBox="0 0 14 14"><path d="M6 13l7-7M10 13l3-3" stroke="#555" stroke-width="1" fill="none"/></svg></div></div>`;
  }
}
customElements.define('ez-textarea',EzTextarea);
class EzScrollbar extends Base{
  connectedCallback(){
    this.shadowRoot.innerHTML=`<style>
    :host{display:flex;flex-direction:column;align-items:center;width:15px;flex:none;background:#fdfdfd;height:100%}
    .u{width:0;height:0;border-left:4.5px solid transparent;border-right:4.5px solid transparent;border-bottom:7px solid #8a8a8a;margin-top:8px}
    .th{width:9px;height:466px;border-radius:5px;background:#8a8a8a;margin-top:8px}
    </style><div class="u"></div><div class="th"></div>`;
  }
}
customElements.define('ez-scrollbar',EzScrollbar);
class EzMark extends Base{
  connectedCallback(){
    const [x,y,w,h]=this.attr('box').split(',');
    this.shadowRoot.innerHTML=`<style>
    :host{position:absolute;left:${x}px;top:${y}px;width:${w}px;height:${h}px;box-sizing:border-box;border:5px solid #ed1c24;z-index:5;pointer-events:none}
    </style>`;
  }
}
customElements.define('ez-mark',EzMark);
class EzNumber extends Base{
  connectedCallback(){
    this.shadowRoot.innerHTML=`<style>
    :host{position:absolute;left:${this.attr('x')}px;top:${this.attr('y')}px;z-index:5;color:#ed1c24;font:700 31px/1 "Noto Sans",sans-serif;letter-spacing:0}
    </style><slot></slot>`;
  }
}
customElements.define('ez-number',EzNumber);
class EzDetail extends Base{
  connectedCallback(){
    const copy='<ez-icon name="copy" size="15"></ez-icon>';
    const rows=[['Id:',32,'1'],['Mã:',32,'ZALO'],['Tên:',32,'ZALO'],['Phiên bản:',32,''],['Mã ứng dụng:',32,'1230872614558155187'],['Logo:',38,''],['Băng rôn:',42,''],['Đường dẫn dịch vụ:',31,''],['Đường dẫn API dịch vụ:',32,''],['Khoá máy khách:',32,''],['Khoá bí mật:',32,'<span class="ast">************</span>'],['Khoá bí mật webhook:',33,'<span class="ast">************</span>'],['Code Challenge:',32,'<span class="code">VlxyeEw_qB8s7CqNaNqR0MIWqsOkZ7iFjcfEw8AJeKI</span>'+copy],['Code Verifier:',48,'<span class="code">SrFlUtGrfJUFZEvpFSLdh_-ClmXyZAD8mzP376mFQ4JKQ0K-vmEjOqbswBAKdOxGYJGuHMs8EsoD8gnhqYcRQUSsyC6k9Pc2spRxH1OVsVbDs6vROvl9OWJXl7g2YyPfUJsMlka0jyO0wQJz5EgJXDv7io0VoKylytoBkAWVa68</span>'+copy],['Kênh nhận thông báo:',32,''],['Trạng thái:',32,'<span style="color:#28a745">Đã kích hoạt</span>'],['Tạo lúc:',32,'2024-03-31 16:17:29'],['Cập nhật lúc:',32,'2025-04-28 09:09:17']];
    this.shadowRoot.innerHTML=`<style>
    :host{display:block;padding:0 16px;flex:1;min-width:0;overflow:hidden}
    header{display:flex;align-items:center;height:63px;padding-bottom:6px}
    h1{margin:0;font-size:26.5px;font-weight:400;white-space:nowrap;letter-spacing:-.5px;line-height:1.2;color:#343a40}
    .crumb{margin-left:auto;display:flex;gap:8px;padding-bottom:6px;color:#6c757d;white-space:nowrap;letter-spacing:-.3px}
    .crumb a{color:#007bff}
    .ast{letter-spacing:-1.3px}
    .code{letter-spacing:-.17px}
    .act{padding:3px 0 0 378px;display:block}
    hr{border:0;border-top:1px solid #dee2e6;margin:16px 0 0}
    h3{margin:0;font-size:25.5px;font-weight:400;line-height:49px;height:49px;padding-top:16px;color:#343a40;letter-spacing:-.35px;white-space:nowrap}
    .save{display:block;padding-left:378px}
    .req{color:#dc3545}
    ez-row span{display:inline-block}
    .tight{letter-spacing:-.64px}
    </style>
    <header>
      <h1>Chi tiết dịch vụ OA</h1>
      <ez-button outline h="35" w="72" style="margin-left:9px"><span>Sửa</span><ez-icon name="edit" size="16"></ez-icon></ez-button>
      <div class="crumb"><a>Các dịch vụ OA</a><span>/</span><span>Chi tiết dịch vụ OA</span></div>
    </header>
    ${rows.map(([l,h,v])=>`<ez-row label="${l}" h="${h}">${v}</ez-row>`).join('')}
    <div class="act"><ez-button w="156"><span>Lấy access token</span><ez-icon name="ext" size="16"></ez-icon></ez-button></div>
    <hr>
    <h3>Các kịch bản</h3>
    <ez-field w="742"><span slot="label">Phản hồi tin nhắn văn bản</span><ez-select>Danh sách công việc</ez-select></ez-field>
    <div class="save"><ez-button w="364">Lưu</ez-button></div>
    <hr>
    <h3>Mẫu thông báo</h3>
    <ez-field w="742"><span slot="label">Tên mẫu</span><ez-select>payment_message</ez-select></ez-field>
    <ez-field><span slot="label">Mã mẫu (ZALO)</span><ez-input>Mã mẫu</ez-input></ez-field>
    <ez-field kind="area"><span slot="label">Các tham số (<span class="req">*</span>)</span><ez-textarea>{
    <span class="tight">"date": "now||DateTime||dd/MM/yyyy",</span>
    "vocative": "vocative",
    "name": "displayName",
    "phone_number": "phone",</ez-textarea></ez-field>`;
  }
}
customElements.define('ez-detail',EzDetail);
class EzApp extends Base{
  connectedCallback(){
    this.shadowRoot.innerHTML=`<style>
    :host{display:flex;height:1280px;width:2552px;position:relative;overflow:hidden;background:#f4f6f9}
    .main{flex:1;min-width:0;display:flex;flex-direction:column;height:100%}
    </style>
    <ez-sidebar></ez-sidebar>
    <div class="main"><ez-topbar></ez-topbar><ez-detail></ez-detail></div>
    <ez-scrollbar></ez-scrollbar>
    <ez-mark box="246,49,247,71"></ez-mark>
    <ez-mark box="248,525,175,35"></ez-mark>
    <ez-mark box="619,518,413,45"></ez-mark>
    <ez-number x="899" y="475">5</ez-number>`;
  }
}
customElements.define('ez-app',EzApp);
</script>
</body>
</html>
